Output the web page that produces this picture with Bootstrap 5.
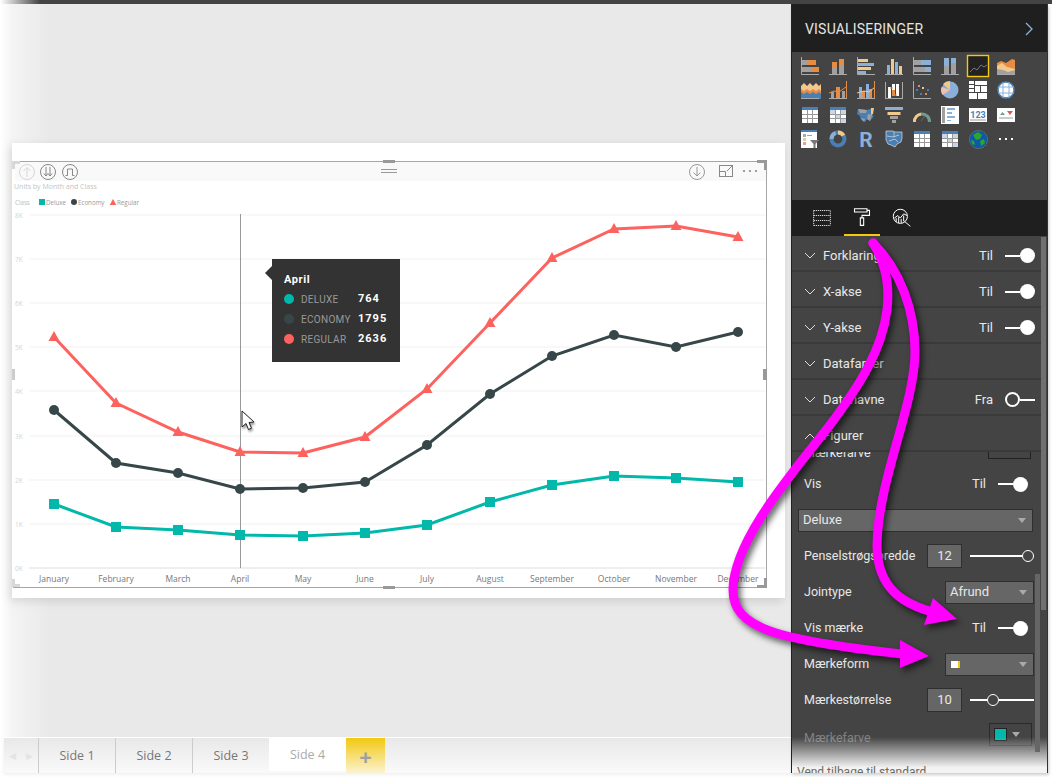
<!DOCTYPE html>
<html lang="da">
<head>
    <meta charset="UTF-8">
    <title>Visualiseringer</title>
    <link href="https://cdn.jsdelivr.net/npm/bootstrap@5.3.0/dist/css/bootstrap.min.css" rel="stylesheet">
    <style>
        html, body { margin: 0; background: #fff; }
        .app-shot { width: 1052px; height: 777px; overflow: hidden; position: relative; font-family: "Open Sans", sans-serif; }
        .top-strip { height: 4px; background: linear-gradient(90deg, #fff 0, #444 40px); }
        .work-row { height: 769px; }

        /* report canvas */
        .report-side { width: 791px; height: 769px; background: linear-gradient(90deg, #fff 0, #f4f4f4 12px, #e9e9e9 50px); }
        .canvas-zone { height: 733px; padding: 139px 0 0 12px; }
        .chart-sheet { width: 773px; height: 455px; background: #fff; position: relative; box-shadow: -2px 3px 9px rgba(0,0,0,.12); }
        .chart-sheet svg { display: block; }
        .chart-sheet text { font-family: "Open Sans", sans-serif; }
        .tip-box { position: absolute; left: 260px; top: 116px; width: 128px; height: 103px; background: #333; padding: 13px 12px; font-family: Roboto, sans-serif; }
        .tip-box::before { content: ""; position: absolute; left: -7px; top: 7px; border: 7px solid transparent; border-left: 0; border-right-color: #333; }
        .tip-title { color: #fff; font-weight: 700; font-size: 11px; letter-spacing: .6px; line-height: 15px; margin-bottom: 2px; }
        .tip-line { height: 20px; font-size: 10px; }
        .tip-dot { width: 10px; height: 10px; border-radius: 50%; margin-right: 7px; flex: none; }
        .tip-name { width: 57px; color: #999; letter-spacing: .3px; }
        .tip-num { color: #fff; font-weight: 700; font-size: 11px; letter-spacing: 1px; }

        /* page tabs */
        .page-tabs { height: 36px; border-top: 1px solid #fff; background: linear-gradient(180deg, #e8e8e8, #fafafa); margin-left: 4px; box-shadow: 0 2px 3px rgba(0,0,0,.06); }
        .tab-nav { width: 34px; color: #e4e4e4; font-size: 9px; }
        .tab-page { width: 77px; border-left: 1px solid #ccc; color: #777; font-size: 12.5px; padding-top: 1px; }
        .tab-page.is-open { background: #fff; color: #aaa; height: 33px; border-left: 0; padding-top: 2px; }
        .tab-add { width: 39px; background: linear-gradient(180deg, #f2c811, #fbf3d0); color: #a0a0a0; font-size: 22px; font-weight: 700; line-height: 1; }

        /* right pane */
        .pane-side { width: 257px; height: 769px; background: #444; border-left: 1px solid #222; border-right: 1px solid #333; position: relative; font-family: Roboto, sans-serif; color: #e8e8e8; box-shadow: 1px 2px 3px rgba(0,0,0,.2); }
        .pane-head { height: 48px; background: #1f1f1f; padding: 2px 13px 0; font-size: 14px; letter-spacing: .2px; color: #e4e4e4; }
        .viz-grid { height: 148px; padding: 5px 0 0 9px; display: grid; grid-template-columns: repeat(8, 28px); grid-auto-rows: 24.4px; align-content: start; }
        .viz-grid svg { width: 22px; height: 22px; display: block; overflow: visible; }
        .pane-tabs { height: 36px; background: #1f1f1f; padding-left: 20px; gap: 12px; }
        .pane-tabs svg { width: 20px; height: 20px; display: block; }
        .tab-pick { width: 36px; height: 36px; border-bottom: 2px solid #f2c811; }
        .set-list { height: 537px; overflow: hidden; position: relative; }
        .set-head { height: 36px; padding: 5px 6px 0 12px; border-bottom: 2px solid #3a3a3a; font-size: 13px; margin-right: 6px; }
        .set-head svg { width: 12px; height: 12px; margin-right: 7px; flex: none; }
        .on-off { font-size: 13px; margin-right: 12px; }
        .sw-on, .sw-off { width: 30px; height: 16px; display: flex; align-items: center; flex: none; }
        .sw-on::before { content: ""; flex: 1; height: 2px; background: #fff; }
        .sw-on::after { content: ""; width: 15px; height: 15px; border-radius: 50%; background: #fff; }
        .sw-off::before { content: ""; width: 15px; height: 15px; border-radius: 50%; border: 2px solid #fff; }
        .sw-off::after { content: ""; flex: 1; height: 2px; background: #fff; }
        .sw-inset { margin-right: 5px; }
        .set-clip { height: 7px; overflow: hidden; padding: 0 16px 0 12px; font-size: 12.5px; margin-right: 0; }
        .clip-box { width: 43px; height: 23px; border: 1px solid #222; flex: none; margin-bottom: 0; }
        .set-row { height: 36px; padding: 0 14px 0 12px; font-size: 12.5px; }
        .set-rows { padding-top: 7px; }
        .pick-box { background: #666; border: 1px solid #2f2f2f; height: 23px; padding: 0 6px 0 4px; font-size: 13px; }
        .pick-all { width: 236px; margin-left: -6px; }
        .pick-sm { width: 89px; margin-right: -1px; }
        .pick-arrow { width: 0; height: 0; border: 4px solid transparent; border-bottom: 0; border-top: 5px solid #aaa; flex: none; }
        .num-box { width: 35px; height: 24px; background: #666; border: 1px solid #2f2f2f; text-align: center; line-height: 22px; flex: none; margin-right: 8px; font-size: 13px; }
        .range-track { width: 64px; height: 2px; background: #fff; position: relative; margin-right: -1px; }
        .range-knob { position: absolute; top: -5px; width: 12px; height: 12px; border-radius: 50%; border: 1px solid #fff; background: #444; }
        .mark-chip { width: 9px; height: 7px; background: #fff; border-right: 2px solid #f2c811; margin-left: 1px; }
        .color-btn { width: 43px; height: 23px; border: 1px solid #2a2a2a; padding-left: 4px; gap: 5px; margin-right: 1px; }
        .color-swatch { width: 13px; height: 13px; background: #01b8aa; border: 1px solid #222; }
        .dim-label { color: #808080; padding-top: 8px; }
        .color-row { margin-top: -2px; }
        .set-fade { position: absolute; left: 0; right: 0; bottom: 0; height: 36px; background: linear-gradient(180deg, rgba(240,240,240,0), #f3f3f3 85%); }
        .reset-line { position: absolute; left: 5px; bottom: -8px; font-size: 12px; color: #6b6b60; white-space: nowrap; }
        .bar-outer { position: absolute; right: 1px; top: 233px; width: 5px; height: 373px; background: #707070; }
        .bar-inner { position: absolute; right: 7px; top: 570px; width: 5px; height: 178px; background: #666; }
        .ink-layer { position: absolute; left: 0; top: 0; pointer-events: none; filter: drop-shadow(3px 4px 3px rgba(0,0,0,.6)); }
    </style>
</head>
<body>
<div class="app-shot">
    <div class="top-strip"></div>
    <div class="work-row d-flex">
        <!-- report side -->
        <div class="report-side d-flex flex-column">
            <div class="canvas-zone">
                <div class="chart-sheet">
                    <svg id="chartSvg" width="773" height="455" viewBox="12 143 773 455"></svg>
                    <div class="tip-box">
                        <div class="tip-title">April</div>
                        <div class="tip-line d-flex align-items-center"><span class="tip-dot" style="background:#01b8aa"></span><span class="tip-name">DELUXE</span><span class="tip-num">764</span></div>
                        <div class="tip-line d-flex align-items-center"><span class="tip-dot" style="background:#374649"></span><span class="tip-name">ECONOMY</span><span class="tip-num">1795</span></div>
                        <div class="tip-line d-flex align-items-center"><span class="tip-dot" style="background:#fd625e"></span><span class="tip-name">REGULAR</span><span class="tip-num">2636</span></div>
                    </div>
                </div>
            </div>
            <div class="page-tabs d-flex">
                <div class="tab-nav d-flex align-items-center justify-content-around"><span>◀</span><span>▶</span></div>
                <div class="tab-page d-flex align-items-center justify-content-center">Side 1</div>
                <div class="tab-page d-flex align-items-center justify-content-center">Side 2</div>
                <div class="tab-page d-flex align-items-center justify-content-center">Side 3</div>
                <div class="tab-page is-open d-flex align-items-center justify-content-center">Side 4</div>
                <div class="tab-add d-flex align-items-center justify-content-center">+</div>
            </div>
        </div>

        <!-- visualizations pane -->
        <div class="pane-side">
            <div class="pane-head d-flex align-items-center justify-content-between">
                <span>VISUALISERINGER</span>
                <svg width="10" height="14" viewBox="0 0 10 14"><path d="M2 1l6 6-6 6" fill="none" stroke="#8ab4dc" stroke-width="1.3"/></svg>
            </div>
            <div class="viz-grid" id="vizGrid"></div>
            <div class="pane-tabs d-flex align-items-center">
                <svg viewBox="0 0 24 24" fill="none" stroke="#fff" stroke-dasharray="1.5 1"><path d="M2 3h20M2 9h20M2 15h20M2 21h20M2 3v18M22 3v18"/></svg>
                <div class="tab-pick d-flex align-items-center justify-content-center">
                    <svg viewBox="0 0 24 24" fill="none" stroke="#fff" stroke-width="1.3"><path d="M3 2h15v4H3zM18 4h3v6h-9v3M10 13h4v9h-4z"/></svg>
                </div>
                <svg viewBox="0 0 24 24" fill="none" stroke="#fff" stroke-width="1.2"><circle cx="10" cy="10" r="8.5"/><path d="M15 16l7 6M3 12l4-3 3 3 4-5 4 2M5 17v-5M8 18v-7M11 18v-5M14 16V9"/></svg>
            </div>
            <div class="set-list">
                <div class="set-head d-flex align-items-center"><svg viewBox="0 0 12 12"><path d="M1 3l5 5 5-5" fill="none" stroke="#ddd"/></svg><span class="flex-grow-1">Forklaring</span><span class="on-off">Til</span><span class="sw-on"></span></div>
                <div class="set-head d-flex align-items-center"><svg viewBox="0 0 12 12"><path d="M1 3l5 5 5-5" fill="none" stroke="#ddd"/></svg><span class="flex-grow-1">X-akse</span><span class="on-off">Til</span><span class="sw-on"></span></div>
                <div class="set-head d-flex align-items-center"><svg viewBox="0 0 12 12"><path d="M1 3l5 5 5-5" fill="none" stroke="#ddd"/></svg><span class="flex-grow-1">Y-akse</span><span class="on-off">Til</span><span class="sw-on"></span></div>
                <div class="set-head d-flex align-items-center"><svg viewBox="0 0 12 12"><path d="M1 3l5 5 5-5" fill="none" stroke="#ddd"/></svg><span class="flex-grow-1">Datafarver</span></div>
                <div class="set-head d-flex align-items-center"><svg viewBox="0 0 12 12"><path d="M1 3l5 5 5-5" fill="none" stroke="#ddd"/></svg><span class="flex-grow-1">Datanavne</span><span class="on-off">Fra</span><span class="sw-off"></span></div>
                <div class="set-head d-flex align-items-center"><svg viewBox="0 0 12 12"><path d="M1 9l5-5 5 5" fill="none" stroke="#ddd"/></svg><span class="flex-grow-1">Figurer</span></div>
                <div class="set-clip d-flex align-items-end justify-content-between"><span class="lh-1">Mærkefarve</span><span class="clip-box"></span></div>
                <div class="set-rows">
                    <div class="set-row d-flex align-items-center"><span class="flex-grow-1">Vis</span><span class="on-off">Til</span><span class="sw-on sw-inset"></span></div>
                    <div class="set-row d-flex align-items-center"><div class="pick-box pick-all d-flex align-items-center justify-content-between flex-grow-1"><span>Deluxe</span><span class="pick-arrow"></span></div></div>
                    <div class="set-row d-flex align-items-center"><span class="flex-grow-1">Penselstrøgsbredde</span><span class="num-box">12</span><span class="range-track"><span class="range-knob" style="left:52px"></span></span></div>
                    <div class="set-row d-flex align-items-center"><span class="flex-grow-1">Jointype</span><div class="pick-box pick-sm d-flex align-items-center justify-content-between"><span>Afrund</span><span class="pick-arrow"></span></div></div>
                    <div class="set-row d-flex align-items-center"><span class="flex-grow-1">Vis mærke</span><span class="on-off">Til</span><span class="sw-on sw-inset"></span></div>
                    <div class="set-row d-flex align-items-center"><span class="flex-grow-1">Mærkeform</span><div class="pick-box pick-sm d-flex align-items-center justify-content-between"><span class="mark-chip"></span><span class="pick-arrow"></span></div></div>
                    <div class="set-row d-flex align-items-center"><span class="flex-grow-1">Mærkestørrelse</span><span class="num-box">10</span><span class="range-track"><span class="range-knob" style="left:17px"></span></span></div>
                    <div class="set-row color-row d-flex align-items-center"><span class="flex-grow-1 dim-label">Mærkefarve</span><div class="color-btn d-flex align-items-center"><span class="color-swatch"></span><span class="pick-arrow"></span></div></div>
                </div>
                <div class="set-fade"></div>
                <div class="reset-line">Vend tilbage til standard</div>
            </div>
            <div class="bar-outer"></div>
            <div class="bar-inner"></div>
        </div>
    </div>

    <!-- magenta call-out arrows -->
    <svg class="ink-layer" width="1052" height="777" viewBox="0 0 1052 777">
        <g fill="none" stroke="#ff00ff" stroke-width="9" stroke-linecap="round">
            <path d="M873 243C885 262 890 285 887 310C882 350 860 385 830 425C795 470 733 540 733 590C733 628 775 640 902 654"/>
            <path d="M873 243C900 270 915 310 915 352C915 405 878 480 877 545C877 590 905 605 936 613"/>
        </g>
        <path d="M957 619L933 598L924 625Z" fill="#ff00ff"/>
        <path d="M929 656L900 640L900 668Z" fill="#ff00ff"/>
    </svg>
</div>

<script src="https://cdn.jsdelivr.net/npm/bootstrap@5.3.0/dist/js/bootstrap.bundle.min.js"></script>
<script>
    // chart data, in page pixels
    const xs = [54, 116, 178, 240, 303, 365, 427, 490, 552, 614, 676, 738];
    const months = ['January', 'February', 'March', 'April', 'May', 'June', 'July', 'August', 'September', 'October', 'November', 'December'];
    const regular = [337, 403, 432, 452, 453, 437, 389, 323, 258, 229, 226, 237];
    const economy = [410, 463, 473, 489, 488, 482, 445, 394, 356, 335, 347, 332];
    const deluxe = [504, 527, 530, 535, 536, 533, 525, 502, 485, 476, 478, 482];
    const teal = '#01b8aa', slate = '#374649', coral = '#fd625e';

    function poly(ys, color) {
        return `<polyline points="${ys.map((y, i) => xs[i] + ',' + y).join(' ')}" fill="none" stroke="${color}" stroke-width="3"/>`;
    }

    let s = '';
    s += '<rect x="15" y="162" width="751" height="19" fill="#f9f9f9"/>';
    ['8K', '7K', '6K', '5K', '4K', '3K', '2K', '1K', '0K'].forEach((lab, i) => {
        const y = Math.round(214.5 + i * 44.2);
        s += `<line x1="29" x2="765" y1="${y}" y2="${y}" stroke="${i === 8 ? '#ddd' : '#f1f1f1'}"/>`;
        s += `<text x="15" y="${y + 2.5}" font-size="6.5" fill="#d4d4d4">${lab}</text>`;
    });
    s += '<line x1="240.5" x2="240.5" y1="214" y2="568" stroke="#999"/>';
    months.forEach((m, i) => { s += `<text x="${xs[i]}" y="582" font-size="8.5" fill="#777" text-anchor="middle">${m}</text>`; });
    s += poly(deluxe, teal) + poly(economy, slate) + poly(regular, coral);
    xs.forEach((x, i) => {
        s += `<rect x="${x - 5}" y="${deluxe[i] - 5}" width="10" height="10" fill="${teal}"/>`;
        s += `<circle cx="${x}" cy="${economy[i]}" r="5" fill="${slate}"/>`;
        s += `<path d="M${x} ${regular[i] - 6}l5.5 10h-11z" fill="${coral}"/>`;
    });
    // title and legend
    s += '<text x="14" y="189" font-size="7" fill="#c4c4c4">Units by Month and Class</text>';
    s += '<text x="15" y="205" font-size="6.2" fill="#bbb">Class</text>';
    s += `<rect x="39" y="199" width="6" height="6" fill="${teal}"/><text x="46" y="205" font-size="6.2" fill="#999">Deluxe</text>`;
    s += `<circle cx="74" cy="202" r="3" fill="${slate}"/><text x="78" y="205" font-size="6.2" fill="#999">Economy</text>`;
    s += `<path d="M113 199l3.3 6h-6.6z" fill="${coral}"/><text x="117" y="205" font-size="6.2" fill="#999">Regular</text>`;
    // frame and handles
    s += '<path d="M13 161.5H766.5V587.5H13" fill="none" stroke="#a6a6a6"/>';
    s += '<path d="M12 161h8v3h-5v5h-3zM12 587h8v-3h-5v-5h-3z" fill="#d8d8d8"/>';
    s += '<path d="M757 160h10v10h-3v-7h-7zM757 588h10v-10h-3v7h-7z" fill="#999"/>';
    s += '<rect x="383" y="160" width="12" height="3" fill="#999"/><rect x="383" y="586" width="12" height="3" fill="#999"/>';
    s += '<rect x="12" y="369" width="3" height="11" fill="#ccc"/><rect x="763" y="369" width="4" height="11" fill="#999"/>';
    s += '<path d="M381 169.5h16M381 172.5h16" stroke="#999"/>';
    // visual header icons
    s += '<g fill="none" stroke="#d6d6d6"><circle cx="27" cy="172" r="7.5"/><path d="M27 177v-9M23.5 171l3.5-3.5 3.5 3.5"/></g>';
    s += '<g fill="none" stroke="#888"><circle cx="48" cy="172" r="7.5"/><path d="M46 167v9M50 167v9M43.8 173.5l2.2 2.5 2-2.5 2 2.5 2.2-2.5"/></g>';
    s += '<g fill="none" stroke="#888"><circle cx="70" cy="172" r="7.5"/><path d="M65.5 175.5h2v-6.5h5v6.5h2"/></g>';
    s += '<g fill="none" stroke="#999"><circle cx="697" cy="172" r="7.5"/><path d="M697 167v9M693.5 172.5l3.5 3.5 3.5-3.5"/></g>';
    s += '<g fill="none" stroke="#888"><rect x="719.5" y="165.5" width="13" height="11"/><path d="M719.5 171.5h6v5M727 171l5-5"/></g>';
    s += '<g fill="#888"><circle cx="744" cy="171" r="1.1"/><circle cx="750" cy="171" r="1.1"/><circle cx="756" cy="171" r="1.1"/></g>';
    // mouse cursor
    s += '<path d="M242 411v16l4-3.5 2.5 6 3-1.3-2.5-5.7 5-.5z" fill="#fff" stroke="#222" style="filter:drop-shadow(1px 2px 1px rgba(0,0,0,.4))"/>';
    document.getElementById('chartSvg').innerHTML = s;

    // visualization gallery, 18 unit icons
    const org = '#e68c43', tan = '#f2c98d', gry = '#a0a0a0', blu = '#8ab0d8', dbl = '#4a7fb5', wht = '#fff', ax = '#aaa';
    const r = (x, y, w, h, c) => `<rect x="${x}" y="${y}" width="${w}" height="${h}" fill="${c}"/>`;
    const axisLB = `<path d="M.5 0v17.5H18" fill="none" stroke="${ax}"/>`;
    const axisB = `<path d="M0 17.5H18" fill="none" stroke="${ax}"/>`;
    const tableIco = (cell, head) => {
        let t = r(1, 1, 16, 3, head) + r(1, 4, 16, 13, wht);
        [6, 11].forEach(x => { t += r(x, 4, 1, 13, '#999'); });
        [8, 12].forEach(y => { t += r(1, y, 16, 1, '#999'); });
        if (cell) { t += r(1, 4, 5, 4, cell) + r(7, 9, 4, 3, cell) + r(12, 13, 5, 4, cell) + r(12, 4, 5, 4, cell); }
        return t;
    };
    const icons = [
        axisLB + r(1, 3, 5, 5, gry) + r(6, 3, 9, 5, org) + r(1, 10, 9, 5, gry) + r(10, 10, 8, 5, org),
        axisB + r(3, 10, 5, 7, gry) + r(3, 5, 5, 5, org) + r(10, 9, 5, 8, gry) + r(10, 2, 5, 7, org),
        axisLB + r(1, 2, 10, 3, tan) + r(1, 6, 16, 3, blu) + r(1, 10, 13, 3, tan) + r(1, 14, 8, 3, blu),
        axisB + r(2, 8, 3, 9, blu) + r(6, 2, 3, 15, tan) + r(10, 5, 3, 12, blu) + r(14, 9, 3, 8, tan),
        axisLB + r(1, 3, 7, 5, gry) + r(8, 3, 10, 5, blu) + r(1, 10, 11, 5, gry) + r(12, 10, 6, 5, blu),
        axisB + r(3, 9, 5, 8, gry) + r(3, 1, 5, 8, blu) + r(10, 6, 5, 11, gry) + r(10, 1, 5, 5, blu),
        `<rect x="-1.5" y="-1.5" width="21" height="21" fill="#222" stroke="#f2c811" stroke-width="1.4"/><path d="M1 15l4-4 3 2 4-5 3 2 3-2" fill="none" stroke="#777"/>`,
        axisB + `<path d="M0 6l4-2 5 2 6-4 3 1v14H0z" fill="${org}"/><path d="M0 9l5-3 5 4 8 2v5H0z" fill="${tan}"/><path d="M0 12l6 1 5 2 7-2v4H0z" fill="${gry}"/>`,
        `<path d="M0 5l3-3 3 3 3-3 3 3 3-3 3 3 2-2v7H0z" fill="${tan}"/><path d="M0 8l3 2 3-2 3 2 3-2 3 2 3-2 2 2v4H0z" fill="${org}"/><path d="M0 11l3 2 3-2 3 2 3-2 3 2 3-2 2 2v5H0z" fill="${dbl}"/>` + axisB,
        axisB + r(2, 11, 3, 6, gry) + r(7, 6, 4, 11, org) + r(13, 10, 3, 7, gry) + `<path d="M0 12l5-2 5 1 7-5" fill="none" stroke="${org}"/><path d="M17.5 0v17" stroke="${org}"/>`,
        axisB + r(2, 6, 3, 11, blu) + r(5, 10, 3, 7, org) + r(9, 3, 3, 14, blu) + r(12, 8, 3, 9, org) + `<path d="M0 12l7-2 5 1 6-5" fill="none" stroke="${tan}"/><path d="M17.5 0v17" stroke="${org}"/>`,
        axisB + `<path d="M.5 1v16M17.5 1v16" stroke="${ax}"/>` + r(3, 6, 3, 11, wht) + r(7, 3, 3, 6, wht) + r(7, 9, 3, 6, org) + r(11, 3, 3, 12, wht) + `<path d="M5 7h3M10 14h2" stroke="${org}"/>`,
        axisLB + r(3, 8, 2, 2, dbl) + r(7, 12, 2, 2, dbl) + r(9, 6, 2, 2, tan) + r(14, 8, 2, 2, dbl) + r(12, 12, 2, 2, org) + r(5, 4, 2, 2, '#d88'),
        `<circle cx="9" cy="9" r="8.5" fill="${blu}"/><path d="M9 9L.5 6a9 9 0 0 0 1 8z" fill="#f2c0b0"/><path d="M9 9L2 3a9 9 0 0 1 7-3z" fill="${tan}"/>`,
        r(0, 0, 5, 3, wht) + r(0, 4, 5, 3, wht) + r(0, 8, 5, 3, wht) + r(6, 0, 12, 4, wht) + r(6, 5, 5, 6, wht) + r(12, 5, 6, 6, wht) + r(0, 12, 8, 6, wht) + r(9, 12, 9, 6, wht),
        `<circle cx="9" cy="9" r="8" fill="#fff" stroke="${dbl}" stroke-width="1.5"/><path d="M1 6h16M1 12h16M6 1v16M12 1v16" stroke="${blu}" fill="none"/>`,
        tableIco(null, dbl),
        tableIco('#c9d6e6', dbl),
        `<path d="M1 3l9 1 6-2-1 7 2 1-4 5-3-2-2 3-4-2-1-4-3-2z" fill="${dbl}"/><path d="M1 3l9 1-1 3H3zM11 8l4 1-2 6-3-2zM4 12l4 1-1 3z" fill="${gry}"/><path d="M14 2l3 0-1 6-2 1z" fill="${tan}"/>`,
        r(0, 1, 18, 3, blu) + r(2.5, 6, 13, 3, tan) + r(5, 10, 8, 3, gry) + r(7, 14, 4, 3, gry),
        `<path d="M1.5 16a7.5 7.5 0 0 1 7-8" fill="none" stroke="${tan}" stroke-width="3"/><path d="M8.5 8a7.5 7.5 0 0 1 8 8" fill="none" stroke="#6f9c8c" stroke-width="3"/><path d="M8 15l4-5" stroke="#666"/>`,
        r(0, 0, 18, 18, wht) + r(1, 1, 3, 16, gry) + r(6, 2, 8, 2, blu) + r(6, 6, 5, 2, blu) + r(6, 10, 8, 2, blu) + r(6, 14, 4, 1, blu),
        r(0, 2, 18, 14, wht) + `<text x="9" y="12" font-size="9" font-weight="700" fill="${dbl}" text-anchor="middle" font-family="Roboto, sans-serif">123</text><path d="M1 14h16" stroke="#999"/>`,
        r(0, 2, 18, 14, wht) + '<path d="M3 9l2.5-3L8 9z" fill="#6f9c8c"/><path d="M10 5h6l-3 4z" fill="#e05555"/><path d="M2 12h14" stroke="#999"/>',
        r(0, 0, 16, 18, wht) + r(0, 0, 16, 2, dbl) + r(2, 4, 3, 3, blu) + r(2, 8, 3, 3, tan) + r(2, 12, 3, 3, '#e8a090') + r(6, 5, 5, 1, gry) + `<path d="M9 10h9l-3.5 4v4h-2v-4z" fill="#777"/>`,
        `<circle cx="9" cy="9" r="6.5" fill="none" stroke="${dbl}" stroke-width="4"/><path d="M9 2.5a6.5 6.500 0 0 1 5.500 3" fill="none" stroke="${tan}" stroke-width="4"/><path d="M2.5 9a6.5 6.5 0 0 1 4-6" fill="none" stroke="${blu}" stroke-width="4"/>`,
        `<text x="9" y="17" font-size="21" font-weight="700" fill="${blu}" text-anchor="middle" font-family="Roboto, sans-serif">R</text>`,
        `<path d="M1 1h7l2 1h7v6l-1 4-4 2-2 3-4-2-3-1-2-4z" fill="${dbl}" stroke="#ddd" stroke-width=".7"/><path d="M2 6l6 1 6-2M4 11l6-2 3 3M9 2v5" fill="none" stroke="#ddd" stroke-width=".7"/>`,
        tableIco(null, dbl),
        tableIco('#c9d6e6', dbl),
        '<circle cx="9.5" cy="9.5" r="9" fill="#0c5aa6" stroke="#888" stroke-dasharray="1 1"/><path d="M4 5l5-3 4 3-2 4-4 1zM11 11l4-2 1 4-4 3zM2 10l3 1 1 4-3-1z" fill="#2fa32f"/>',
        r(2, 8, 2, 2, wht) + r(8, 8, 2, 2, wht) + r(14, 8, 2, 2, wht)
    ];
    document.getElementById('vizGrid').innerHTML = icons.map(ic => `<svg viewBox="0 0 22 22">${ic}</svg>`).join('');
</script>
</body>
</html>
